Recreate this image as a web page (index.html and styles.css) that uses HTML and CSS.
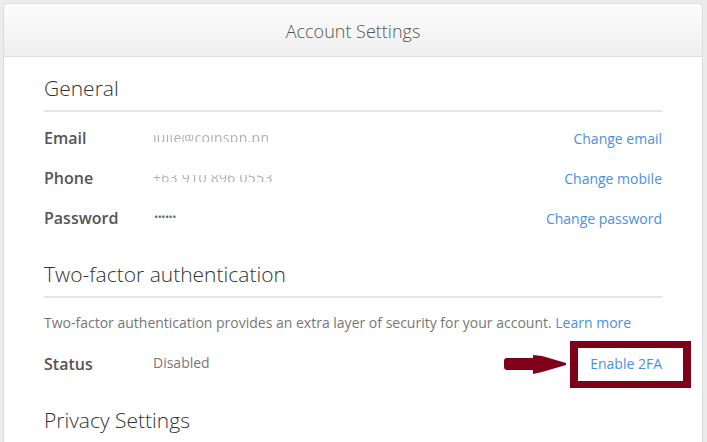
FILE: index.html
```html
<!DOCTYPE html>
<html>
<head>
<meta charset="utf-8">
<link rel="stylesheet" href="styles.css">
</head>
<body>
<div class="card">
  <div class="card-header">Account Settings</div>
  <div class="card-body">
    <h2 class="section-title">General</h2>
    <div class="rule"></div>
    <div class="row">
      <span class="label">Email</span>
      <span class="value"><span class="masked">julie@coinsph.ph</span></span>
      <a class="link">Change email</a>
    </div>
    <div class="row">
      <span class="label">Phone</span>
      <span class="value"><span class="masked">+63 910 896 0553</span></span>
      <a class="link">Change mobile</a>
    </div>
    <div class="row">
      <span class="label">Password</span>
      <span class="value"><span class="dots">••••••</span></span>
      <a class="link">Change password</a>
    </div>

    <h2 class="section-title spaced">Two-factor authentication</h2>
    <div class="rule"></div>
    <p class="desc">Two-factor authentication provides an extra layer of security for your account. <a class="link">Learn more</a></p>
    <div class="row status-row">
      <span class="label">Status</span>
      <span class="value plain">Disabled</span>
      <span class="btn-wrap">
        <svg class="arrow" width="66" height="20" viewBox="0 0 66 20" aria-hidden="true">
          <rect x="0" y="3" width="34" height="12" rx="3" fill="#80001a"/>
          <polygon points="29,0 38,1 62,8 62,10 38,17 29,19" fill="#80001a"/>
        </svg>
        <a class="link btn">Enable 2FA</a>
      </span>
    </div>

    <h2 class="section-title spaced">Privacy Settings</h2>
  </div>
</div>
</body>
</html>
```

FILE: styles.css
```css
html, body {
  margin: 0;
  padding: 0;
}
body {
  background: #ececec;
  font-family: "Open Sans", "Liberation Sans", sans-serif;
  padding: 3px 4px 0 3px;
  height: 442px;
  box-sizing: border-box;
  overflow: hidden;
}
.card {
  background: #fff;
  border: 1px solid #dcdcdc;
  border-bottom: none;
  border-radius: 5px 5px 0 0;
  height: 460px;
}
.card-header {
  height: 53px;
  border-bottom: 1px solid #dedede;
  border-radius: 5px 5px 0 0;
  background: linear-gradient(#fdfdfd, #efefef);
  display: flex;
  align-items: center;
  justify-content: center;
  font-size: 18px;
  font-weight: 300;
  color: #555;
  padding-top: 1px;
  box-sizing: border-box;
}
.card-body {
  padding: 0 40px;
}
.section-title {
  margin: 16px 0 0;
  font-size: 21px;
  font-weight: 300;
  line-height: 30px;
  color: #333;
}
.section-title.spaced {
  margin-top: 21px;
}
.rule {
  height: 2px;
  background: #e5e5e5;
  margin-top: 7px;
  margin-bottom: 6px;
}
.row {
  display: flex;
  align-items: center;
  height: 40px;
}
.label {
  width: 109px;
  flex: none;
  font-size: 16px;
  font-weight: 600;
  color: #555;
}
.value {
  flex: 1;
  font-size: 14px;
  color: #777;
  display: flex;
  align-items: center;
}
.value.plain {
  margin-top: -3px;
}
.masked {
  display: inline-block;
  line-height: 20px;
  color: #b0b0b0;
  letter-spacing: 0.3px;
  -webkit-mask-image: linear-gradient(to bottom, transparent 0, transparent 35%, #000 35%, #000 72%, transparent 72%);
  mask-image: linear-gradient(to bottom, transparent 0, transparent 35%, #000 35%, #000 72%, transparent 72%);
}
.dots {
  font-size: 11px;
  letter-spacing: -0.5px;
  color: #666;
  margin-top: -3px;
  margin-left: 1px;
}
.link {
  color: #4a8fe6;
  font-size: 14px;
  text-decoration: none;
}
.desc {
  margin: 15px 0 0;
  font-size: 14px;
  line-height: 20px;
  color: #777;
}
.status-row {
  margin-top: 11px;
}
.btn-wrap {
  position: relative;
  display: flex;
  align-items: center;
}
.btn {
  display: block;
  padding: 0 0 2px;
  position: relative;
}
.btn::after {
  content: "";
  position: absolute;
  left: -20px;
  right: -29px;
  top: -13px;
  bottom: -13px;
  border: 8px solid #80001a;
  border-top-width: 7px;
  border-bottom-width: 7px;
}
.arrow {
  position: absolute;
  left: -86px;
  top: 50%;
  margin-top: -9px;
}
```
